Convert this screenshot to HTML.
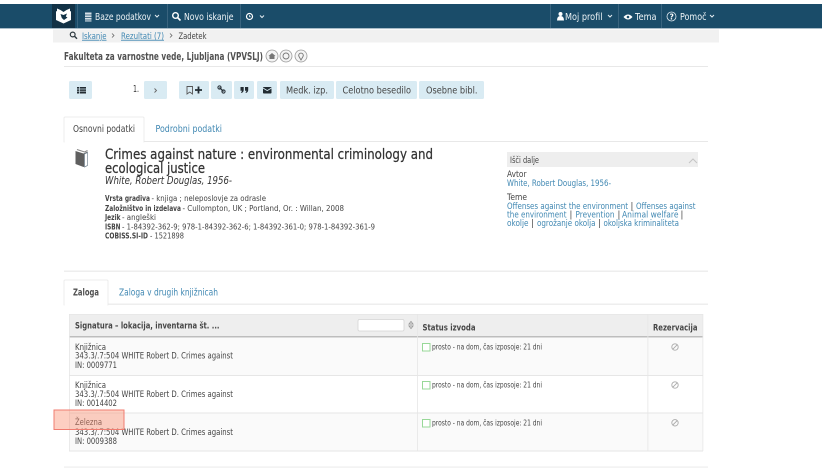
<!DOCTYPE html>
<html lang="sl">
<head>
<meta charset="utf-8">
<title>Crimes against nature</title>
<style>
html,body{margin:0;padding:0;background:#fff;width:822px;height:469px;overflow:hidden}
svg{display:block;filter:blur(.35px)}
text{font-family:"DejaVu Sans","Liberation Sans",sans-serif;fill:#444;font-size:8.500px}
.n{fill:#eef4f7;font-size:9.500px}
.l{fill:#3f87b2}
.b{font-weight:bold}
.s{font-size:7.800px}
.t{font-size:8.500px}
.btn{fill:#d9ebf3}
.ic{fill:#222c33}
</style>
</head>
<body>
<svg width="822" height="469" viewBox="0 0 822 469" xmlns="http://www.w3.org/2000/svg">
<!-- nav -->
<rect x="0" y="4" width="822" height="24" fill="#1a4c69"/>
<rect x="0" y="28" width="822" height="1" fill="#a9bcc8"/>
<rect x="52" y="4" width="23" height="24" fill="#123246"/>
<path d="M57 8.500l3.500 1.500 3 2 3-2 3.500-1.500v2.500l1 .5v8.500l-7.500 3.500-7.500-3.500v-8.500l1-.5z" fill="#fff"/>
<path d="M60.500 14l3 1 3.500-1.500-1.200 3 1.700 1-3.500 2.500-2.200-2z" fill="#123246"/>
<g fill="#39647f"><rect x="77" y="4" width="1" height="24"/><rect x="167" y="4" width="1" height="24"/><rect x="240" y="4" width="1" height="24"/><rect x="550" y="4" width="1" height="24"/><rect x="618" y="4" width="1" height="24"/><rect x="661" y="4" width="1" height="24"/></g>
<!-- db icon -->
<path d="M85 12.500h6.500v9h-6.500z" fill="#d5e0e7"/><path d="M85 15h6.500M85 17.500h6.500M85 20h6.500" stroke="#1a4c69" stroke-width=".7"/>
<text class="n" x="95" y="19.800" textLength="56" lengthAdjust="spacingAndGlyphs">Baze podatkov</text>
<path d="M155 15l2 2 2-2" fill="none" stroke="#e4edf2" stroke-width="1"/>
<circle cx="175.500" cy="15.500" r="2.800" fill="none" stroke="#fff" stroke-width="1.400"/><path d="M177.500 17.500l3 3" stroke="#fff" stroke-width="1.600"/>
<text class="n" x="184" y="19.800" textLength="49.500" lengthAdjust="spacingAndGlyphs">Novo iskanje</text>
<circle cx="249.500" cy="16.500" r="3" fill="none" stroke="#fff" stroke-width="1.200"/><path d="M249.500 15v1.800h1.500" stroke="#fff" stroke-width=".7" fill="none"/>
<path d="M260 15.500l2 2 2-2" fill="none" stroke="#e4edf2" stroke-width="1"/>
<circle cx="560.500" cy="14" r="2" fill="#fff"/><path d="M557 20.500q0-4.500 3.500-4.500t3.500 4.500z" fill="#fff"/>
<text class="n" x="565" y="19.800" textLength="37.500" lengthAdjust="spacingAndGlyphs">Moj profil</text>
<path d="M608 15l2 2 2-2" fill="none" stroke="#e4edf2" stroke-width="1"/>
<path d="M623.500 17q4.500-5 9 0q-4.500 5-9 0z" fill="#fff"/><circle cx="628" cy="17" r="1.300" fill="#1a4c69"/>
<text class="n" x="635" y="19.800" textLength="21.500" lengthAdjust="spacingAndGlyphs">Tema</text>
<circle cx="671.500" cy="16.500" r="4.500" fill="none" stroke="#dfe8ee" stroke-width=".8"/>
<text x="669.500" y="19.500" style="fill:#fff;font-size:7.500px;font-weight:bold">?</text>
<text class="n" x="680" y="19.800" textLength="26.500" lengthAdjust="spacingAndGlyphs">Pomoč</text>
<path d="M710 15l2 2 2-2" fill="none" stroke="#e4edf2" stroke-width="1"/>
<!-- breadcrumb -->
<rect x="53" y="29.500" width="666" height="13" fill="#f1f1f1"/>
<circle cx="72.700" cy="34.500" r="2.400" fill="none" stroke="#2f3a40" stroke-width="1.200"/><path d="M74.500 36.300l2.500 2.500" stroke="#2f3a40" stroke-width="1.400"/>
<text class="t l" x="82" y="38.800" textLength="24.500" lengthAdjust="spacingAndGlyphs" text-decoration="underline">Iskanje</text>
<path d="M112 33.500l2 2-2 2" fill="none" stroke="#666" stroke-width=".8"/>
<text class="t l" x="121" y="38.800" textLength="43" lengthAdjust="spacingAndGlyphs" text-decoration="underline">Rezultati (7)</text>
<path d="M170 33.500l2 2-2 2" fill="none" stroke="#666" stroke-width=".8"/>
<text class="t" x="178.500" y="38.800" textLength="28" lengthAdjust="spacingAndGlyphs">Zadetek</text>
<!-- library -->
<text x="64" y="59.800" textLength="199" lengthAdjust="spacingAndGlyphs" style="font-size:10.500px;fill:#333;font-weight:bold;opacity:.85">Fakulteta za varnostne vede, Ljubljana (VPVSLJ)</text>
<g fill="#f4f4f4" stroke="#999" stroke-width=".8"><circle cx="272" cy="56" r="6"/><circle cx="286" cy="56" r="6"/><circle cx="301" cy="56" r="6"/></g>
<path d="M268.500 56l3.500-3 3.500 3h-1v3h-5v-3z" fill="#777"/>
<circle cx="286" cy="56" r="3" fill="none" stroke="#777" stroke-width=".9"/>
<path d="M301 60l-2-3.500a2.300 2.300 0 1 1 4 0z" fill="none" stroke="#777" stroke-width=".9"/>
<rect x="64" y="66" width="644" height="1" fill="#e8e8e8"/>
<!-- buttons -->
<rect class="btn" x="69" y="81" width="23" height="18" rx="1.500"/>
<rect class="btn" x="144" y="81" width="23" height="18" rx="1.500"/>
<rect class="btn" x="179" y="81" width="30" height="18" rx="1.500"/>
<rect class="btn" x="211" y="81" width="21" height="18" rx="1.500"/>
<rect class="btn" x="234" y="81" width="20" height="18" rx="1.500"/>
<rect class="btn" x="257" y="81" width="20" height="18" rx="1.500"/>
<rect class="btn" x="280" y="81" width="54" height="18" rx="1.500"/>
<rect class="btn" x="336" y="81" width="81" height="18" rx="1.500"/>
<rect class="btn" x="419" y="81" width="65" height="18" rx="1.500"/>
<path d="M77 87h9v6.500h-9z" fill="#222c33"/><path d="M77 89h9M77 91.200h9M79.500 87v6.500" stroke="#d9ebf3" stroke-width=".7"/>
<text x="133" y="92" textLength="6" lengthAdjust="spacingAndGlyphs" style="font-size:9.500px;fill:#333">1.</text>
<path d="M154.500 88.500l2 2-2 2" fill="none" stroke="#666" stroke-width=".9"/>
<path d="M187 86.500h5.500v7.500l-2.750-2-2.750 2z" fill="none" stroke="#555" stroke-width=".9"/>
<path d="M195 90h7M198.500 86.500v7" stroke="#222c33" stroke-width="1.800"/>
<path d="M219.500 87.500l4 4" stroke="#222c33" stroke-width="1.200" fill="none"/><circle cx="219.500" cy="87.500" r="1.600" fill="none" stroke="#222c33" stroke-width="1"/><circle cx="223.500" cy="91.500" r="1.600" fill="none" stroke="#222c33" stroke-width="1"/>
<path d="M240.500 87h3.200v3q0 2-2.200 3l-.5-.8q1-.6 1-1.400h-1.500zM245 87h3.200v3q0 2-2.200 3l-.5-.8q1-.6 1-1.400h-1.500z" fill="#222c33"/>
<rect x="263" y="87" width="8.500" height="6.500" rx=".7" fill="#222c33"/><path d="M263 88l4.250 2.600 4.250-2.600" fill="none" stroke="#d9ebf3" stroke-width=".8"/>
<text x="286" y="93.300" textLength="42" lengthAdjust="spacingAndGlyphs" style="font-size:9.500px">Medk. izp.</text>
<text x="342.500" y="93.300" textLength="68.500" lengthAdjust="spacingAndGlyphs" style="font-size:9.500px">Celotno besedilo</text>
<text x="426" y="93.300" textLength="51.500" lengthAdjust="spacingAndGlyphs" style="font-size:9.500px">Osebne bibl.</text>
<!-- tabs 1 -->
<rect x="64" y="141" width="644" height="1" fill="#e8e8e8"/>
<path d="M64 142v-24q0-1 1-1h78q1 0 1 1v24z" fill="#fff" stroke="#e8e8e8" stroke-width=".8"/>
<rect x="64.500" y="141" width="79" height="1.500" fill="#fff"/>
<text x="73" y="131.800" textLength="62" lengthAdjust="spacingAndGlyphs" style="font-size:9.500px">Osnovni podatki</text>
<text class="l" x="155.500" y="131.800" textLength="66.500" lengthAdjust="spacingAndGlyphs" style="font-size:9.500px">Podrobni podatki</text>
<!-- book -->
<path d="M75.500 151l8 2.500 4 -2v13.500l-4 2-8-3z" fill="#5f5f5f"/>
<path d="M77 149.500l7.500 2.500 3-1.500" fill="none" stroke="#888" stroke-width="1"/>
<path d="M84.500 154v13l3-1.500v-13z" fill="#fff" stroke="#7a8a96" stroke-width=".7"/>
<!-- title -->
<text x="105" y="159" textLength="328" lengthAdjust="spacingAndGlyphs" style="font-size:14px;fill:#333;stroke:#333;stroke-width:.25px">Crimes against nature : environmental criminology and</text>
<text x="105" y="173" textLength="100" lengthAdjust="spacingAndGlyphs" style="font-size:14px;fill:#333;stroke:#333;stroke-width:.25px">ecological justice</text>
<text x="105" y="184" textLength="127" lengthAdjust="spacingAndGlyphs" style="font-size:11px;font-style:italic;fill:#333">White, Robert Douglas, 1956-</text>
<g>
<text class="s b" x="105" y="201" textLength="45" lengthAdjust="spacingAndGlyphs">Vrsta gradiva</text>
<text class="s" x="151.500" y="201" textLength="114.500" lengthAdjust="spacingAndGlyphs">- knjiga ; neleposlovje za odrasle</text>
<text class="s b" x="105" y="211" textLength="76" lengthAdjust="spacingAndGlyphs">Založništvo in izdelava</text>
<text class="s" x="182.500" y="211" textLength="161.500" lengthAdjust="spacingAndGlyphs">- Cullompton, UK ; Portland, Or. : Willan, 2008</text>
<text class="s b" x="105" y="220" textLength="15.500" lengthAdjust="spacingAndGlyphs">Jezik</text>
<text class="s" x="122" y="220" textLength="34" lengthAdjust="spacingAndGlyphs">- angleški</text>
<text class="s b" x="105" y="229.500" textLength="15.500" lengthAdjust="spacingAndGlyphs">ISBN</text>
<text class="s" x="122" y="229.500" textLength="253" lengthAdjust="spacingAndGlyphs">- 1-84392-362-9; 978-1-84392-362-6; 1-84392-361-0; 978-1-84392-361-9</text>
<text class="s b" x="105" y="238.500" textLength="43" lengthAdjust="spacingAndGlyphs">COBISS.SI-ID</text>
<text class="s" x="150" y="238.500" textLength="34" lengthAdjust="spacingAndGlyphs">- 1521898</text>
</g>
<!-- side -->
<rect x="507" y="152" width="191" height="15" fill="#eeeeee"/>
<text class="t" x="510" y="162.800" textLength="29" lengthAdjust="spacingAndGlyphs">Išči dalje</text>
<path d="M689 163l4-4 4 4" fill="none" stroke="#c4c4c4" stroke-width="1"/>
<text class="t" x="507" y="177" textLength="19.500" lengthAdjust="spacingAndGlyphs">Avtor</text>
<text class="t l" x="507" y="186" textLength="104" lengthAdjust="spacingAndGlyphs">White, Robert Douglas, 1956-</text>
<text class="t" x="507" y="200" textLength="20" lengthAdjust="spacingAndGlyphs">Teme</text>
<text class="t l" x="507" y="208.800" textLength="121" lengthAdjust="spacingAndGlyphs">Offenses against the environment</text>
<text class="t" x="630.500" y="208.800">|</text>
<text class="t l" x="636" y="208.800" textLength="59.500" lengthAdjust="spacingAndGlyphs">Offenses against</text>
<text class="t l" x="507" y="217.300" textLength="59.500" lengthAdjust="spacingAndGlyphs">the environment</text>
<text class="t" x="569.500" y="217.300">|</text>
<text class="t l" x="575.500" y="217.300" textLength="39" lengthAdjust="spacingAndGlyphs">Prevention</text>
<text class="t" x="617.500" y="217.300">|</text>
<text class="t l" x="622" y="217.300" textLength="56.500" lengthAdjust="spacingAndGlyphs">Animal welfare</text>
<text class="t" x="680.500" y="217.300">|</text>
<text class="t l" x="507" y="226" textLength="21.500" lengthAdjust="spacingAndGlyphs">okolje</text>
<text class="t" x="531" y="226">|</text>
<text class="t l" x="537" y="226" textLength="58.500" lengthAdjust="spacingAndGlyphs">ogrožanje okolja</text>
<text class="t" x="598" y="226">|</text>
<text class="t l" x="603.500" y="226" textLength="75.500" lengthAdjust="spacingAndGlyphs">okoljska kriminaliteta</text>
<rect x="64" y="270.500" width="644" height="1.500" fill="#eeeeee"/>
<!-- tabs 2 -->
<rect x="64" y="303.500" width="644" height="1.500" fill="#eeeeee"/>
<path d="M64 305v-24q0-1 1-1h42q1 0 1 1v24z" fill="#fff" stroke="#e8e8e8" stroke-width=".8"/>
<rect x="64.500" y="303.500" width="43" height="2" fill="#fff"/>
<text x="73" y="295.300" textLength="26" lengthAdjust="spacingAndGlyphs" style="font-size:9.500px;fill:#333;font-weight:bold;opacity:.85">Zaloga</text>
<text class="l" x="119" y="295.300" textLength="99" lengthAdjust="spacingAndGlyphs" style="font-size:9.500px">Zaloga v drugih knjižnicah</text>
<!-- table -->
<rect x="69" y="314" width="634" height="23" fill="#eeeeee"/>
<rect x="69" y="336" width="634" height="1.500" fill="#bdbdbd"/>
<rect x="69" y="337.500" width="634" height="37.500" fill="#fafafa"/>
<rect x="69" y="375" width="634" height="38" fill="#fff"/>
<rect x="69" y="413" width="634" height="38" fill="#fafafa"/>
<g fill="#e6e6e6">
<rect x="69" y="375" width="634" height="1"/><rect x="69" y="412.500" width="634" height="1"/><rect x="69" y="450.500" width="634" height="1"/>
<rect x="69" y="314" width="634" height=".7"/>
<rect x="69" y="314" width=".8" height="137"/><rect x="702.500" y="314" width=".8" height="137"/>
<rect x="417" y="314" width=".8" height="137"/><rect x="647.500" y="314" width=".8" height="137"/>
</g>
<text class="b" x="75" y="328.300" textLength="144.500" lengthAdjust="spacingAndGlyphs" style="fill:#333;font-size:9px;opacity:.9">Signatura – lokacija, inventarna št. ...</text>
<rect x="358" y="319.500" width="46" height="11.500" rx="1.500" fill="#fff" stroke="#d4d4d4" stroke-width=".8"/>
<path d="M409 324l2-2.500 2 2.500zM409 326l2 2.500 2-2.500z" fill="#fff" stroke="#999" stroke-width=".9"/>
<text class="b" x="422.500" y="330.300" textLength="53" lengthAdjust="spacingAndGlyphs" style="fill:#333;font-size:9px;opacity:.9">Status izvoda</text>
<text class="b" x="653" y="330.300" textLength="44.500" lengthAdjust="spacingAndGlyphs" style="fill:#333;font-size:9px;opacity:.9">Rezervacija</text>
<!-- rows -->
<g>
<text class="t" x="75" y="349.800" textLength="31" lengthAdjust="spacingAndGlyphs">Knjižnica</text>
<text class="t" x="75" y="358.500" textLength="158" lengthAdjust="spacingAndGlyphs">343.3/.7:504 WHITE Robert D. Crimes against</text>
<text class="t" x="75" y="368" textLength="42" lengthAdjust="spacingAndGlyphs">IN: 0009771</text>
<text class="t" x="75" y="387.800" textLength="31" lengthAdjust="spacingAndGlyphs">Knjižnica</text>
<text class="t" x="75" y="396.800" textLength="158" lengthAdjust="spacingAndGlyphs">343.3/.7:504 WHITE Robert D. Crimes against</text>
<text class="t" x="75" y="405.800" textLength="42" lengthAdjust="spacingAndGlyphs">IN: 0014402</text>
<text class="t" x="75" y="425" textLength="27" lengthAdjust="spacingAndGlyphs">Železna</text>
<text class="t" x="75" y="434.800" textLength="158" lengthAdjust="spacingAndGlyphs">343.3/.7:504 WHITE Robert D. Crimes against</text>
<text class="t" x="75" y="443.800" textLength="42" lengthAdjust="spacingAndGlyphs">IN: 0009388</text>
</g>
<g fill="#fff" stroke="#98d898" stroke-width="1">
<rect x="422.500" y="343.500" width="7.500" height="7.500"/>
<rect x="422.500" y="381.500" width="7.500" height="7.500"/>
<rect x="422.500" y="419.500" width="7.500" height="7.500"/>
</g>
<text class="s" x="432" y="349.300" textLength="110" lengthAdjust="spacingAndGlyphs">prosto - na dom, čas izposoje: 21 dni</text>
<text class="s" x="432" y="387.300" textLength="110" lengthAdjust="spacingAndGlyphs">prosto - na dom, čas izposoje: 21 dni</text>
<text class="s" x="432" y="425.300" textLength="110" lengthAdjust="spacingAndGlyphs">prosto - na dom, čas izposoje: 21 dni</text>
<g fill="none" stroke="#aaa" stroke-width=".9">
<circle cx="675" cy="347" r="3.200"/><path d="M672.800 349.200l4.400-4.400"/>
<circle cx="675" cy="385" r="3.200"/><path d="M672.800 387.200l4.400-4.400"/>
<circle cx="675" cy="422.800" r="3.200"/><path d="M672.800 425l4.400-4.400"/>
</g>
<rect x="54" y="410" width="70" height="19.500" fill="#fb8c6e" fill-opacity=".42" stroke="#f07c70" stroke-width="1"/>
<rect x="64" y="466.500" width="644" height="1.200" fill="#eeeeee"/>
</svg>
</body>
</html>
